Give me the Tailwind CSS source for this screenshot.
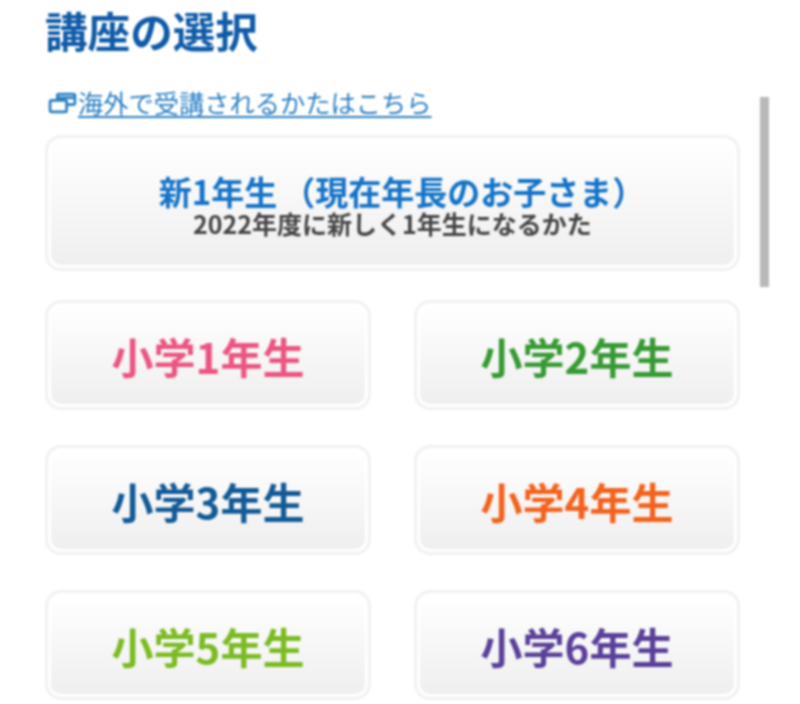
<!DOCTYPE html>
<html lang="ja"><head><meta charset="utf-8">
<script src="https://cdn.jsdelivr.net/npm/@tailwindcss/browser@4"></script>
</head>
<body class="bg-white">
<div class="relative w-[800px] h-[704px] overflow-hidden pl-[45px] pr-[60px] font-['Noto_Sans_CJK_JP','Noto_Sans',sans-serif] blur-[1px]">
  <h1 class="text-[42.6px] leading-[42px] font-bold text-[#0f5ba8] pt-[9px] h-[84px]">講座の選択</h1>
  <a class="flex items-center h-[38px] text-[25.25px] text-[#2a7fc4]">
    <svg class="w-[29px] h-[23px] mr-[1px] ml-[3px] shrink-0" viewBox="0 0 28 22" fill="none" stroke="#2a7fc4" stroke-width="2.6"><rect x="9" y="2" width="17" height="10" rx="1.5"/><path d="M9 5.5h17"/><rect x="2" y="8" width="16" height="11" rx="1.5" fill="#fff"/></svg>
    <span class="underline underline-offset-[3px] decoration-2">海外で受講されるかたはこちら</span>
  </a>
  <div class="mt-[13px] h-[136px] border-[3px] border-[#f1f1f1] p-[3px] bg-white rounded-[16px]">
    <div class="h-full flex flex-col items-center justify-center pt-[4px] rounded-[10px] bg-gradient-to-b from-white to-[#efefef]">
      <span class="text-[33px] leading-[36px] font-bold text-[#1473c8] pl-[19px]">新1年生<span class="ml-[5px]">（</span>現在年長のお子さま）</span>
      <span class="text-[25px] leading-[28px] font-bold text-[#444444]">2022年度に新しく1年生になるかた</span>
    </div>
  </div>
  <div class="mt-[29px] grid grid-cols-2 gap-x-[43px] gap-y-[35px]">
    <div class="h-[110px] border-[3px] border-[#f1f1f1] p-[3px] bg-white rounded-[16px]"><div class="h-full flex items-center justify-center rounded-[10px] bg-gradient-to-b from-white to-[#efefef] text-[42px] font-bold text-[#ec5582]">小学1年生</div></div>
    <div class="h-[110px] border-[3px] border-[#f1f1f1] p-[3px] bg-white rounded-[16px]"><div class="h-full flex items-center justify-center rounded-[10px] bg-gradient-to-b from-white to-[#efefef] text-[42px] font-bold text-[#379a33]">小学2年生</div></div>
    <div class="h-[110px] border-[3px] border-[#f1f1f1] p-[3px] bg-white rounded-[16px]"><div class="h-full flex items-center justify-center rounded-[10px] bg-gradient-to-b from-white to-[#efefef] text-[42px] font-bold text-[#135a96]">小学3年生</div></div>
    <div class="h-[110px] border-[3px] border-[#f1f1f1] p-[3px] bg-white rounded-[16px]"><div class="h-full flex items-center justify-center rounded-[10px] bg-gradient-to-b from-white to-[#efefef] text-[42px] font-bold text-[#f4621c]">小学4年生</div></div>
    <div class="h-[110px] border-[3px] border-[#f1f1f1] p-[3px] bg-white rounded-[16px]"><div class="h-full flex items-center justify-center rounded-[10px] bg-gradient-to-b from-white to-[#efefef] text-[42px] font-bold text-[#7cbb22]">小学5年生</div></div>
    <div class="h-[110px] border-[3px] border-[#f1f1f1] p-[3px] bg-white rounded-[16px]"><div class="h-full flex items-center justify-center rounded-[10px] bg-gradient-to-b from-white to-[#efefef] text-[42px] font-bold text-[#5a4099]">小学6年生</div></div>
  </div>
  <div class="absolute left-[760px] top-[97px] w-[9px] h-[190px] bg-[#b9b9b9]"></div>
</div>
</body></html>
